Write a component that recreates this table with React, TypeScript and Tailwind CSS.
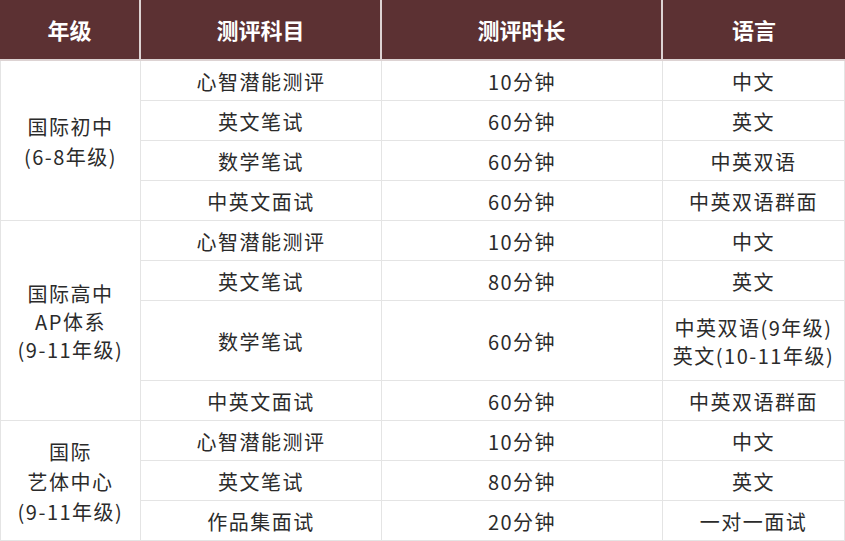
import React from "react";

type Row = { subject: string; time: string; lang: React.ReactNode; tall?: boolean };
type Group = { grade: React.ReactNode; rows: Row[]; span: string };

const groups: Group[] = [
  {
    grade: (
      <div className="leading-[30px]">
        国际初中
        <br />
        (6-8年级)
      </div>
    ),
    span: "row-span-4",
    rows: [
      { subject: "心智潜能测评", time: "10分钟", lang: "中文" },
      { subject: "英文笔试", time: "60分钟", lang: "英文" },
      { subject: "数学笔试", time: "60分钟", lang: "中英双语" },
      { subject: "中英文面试", time: "60分钟", lang: "中英双语群面" },
    ],
  },
  {
    grade: (
      <div className="leading-[28px]">
        国际高中
        <br />
        AP体系
        <br />
        (9-11年级)
      </div>
    ),
    span: "row-span-4",
    rows: [
      { subject: "心智潜能测评", time: "10分钟", lang: "中文" },
      { subject: "英文笔试", time: "80分钟", lang: "英文" },
      {
        subject: "数学笔试",
        time: "60分钟",
        tall: true,
        lang: (
          <div className="leading-[28px]">
            中英双语(9年级)
            <br />
            英文(10-11年级)
          </div>
        ),
      },
      { subject: "中英文面试", time: "60分钟", lang: "中英双语群面" },
    ],
  },
  {
    grade: (
      <div className="leading-[30px]">
        国际
        <br />
        艺体中心
        <br />
        (9-11年级)
      </div>
    ),
    span: "row-span-3",
    rows: [
      { subject: "心智潜能测评", time: "10分钟", lang: "中文" },
      { subject: "英文笔试", time: "80分钟", lang: "英文" },
      { subject: "作品集面试", time: "20分钟", lang: "一对一面试" },
    ],
  },
];

const cell =
  "flex items-center justify-center text-center border-b border-r border-[#e4e4e4] bg-white text-[20px] tracking-[1.5px] pt-[2px]";

export default function App() {
  return (
    <div
      className="w-[845px] h-[541px] bg-white text-[#2b2b2b] overflow-hidden"
      style={{ fontFamily: '"Noto Sans CJK SC", "Noto Sans", sans-serif' }}
    >
      <div className="grid grid-cols-[141px_241px_281px_182px] grid-rows-[61px_40px_40px_40px_40px_40px_40px_80px_40px_40px_40px_40px]">
        {["年级", "测评科目", "测评时长", "语言"].map((h, i) => (
          <div
            key={h}
            className={
              "flex items-center justify-center bg-[#5c3133] text-white text-[22px] font-bold border-b-2 border-[#ddd3d3] " +
              (i < 3 ? "border-r-2" : "")
            }
          >
            {h}
          </div>
        ))}
        {groups.map((g, gi) => (
          <React.Fragment key={gi}>
            <div className={cell + " " + g.span + " border-l"}>{g.grade}</div>
            {g.rows.map((r, ri) => (
              <React.Fragment key={ri}>
                <div className={cell}>{r.subject}</div>
                <div className={cell}>{r.time}</div>
                <div className={cell}>{r.lang}</div>
              </React.Fragment>
            ))}
          </React.Fragment>
        ))}
      </div>
    </div>
  );
}
